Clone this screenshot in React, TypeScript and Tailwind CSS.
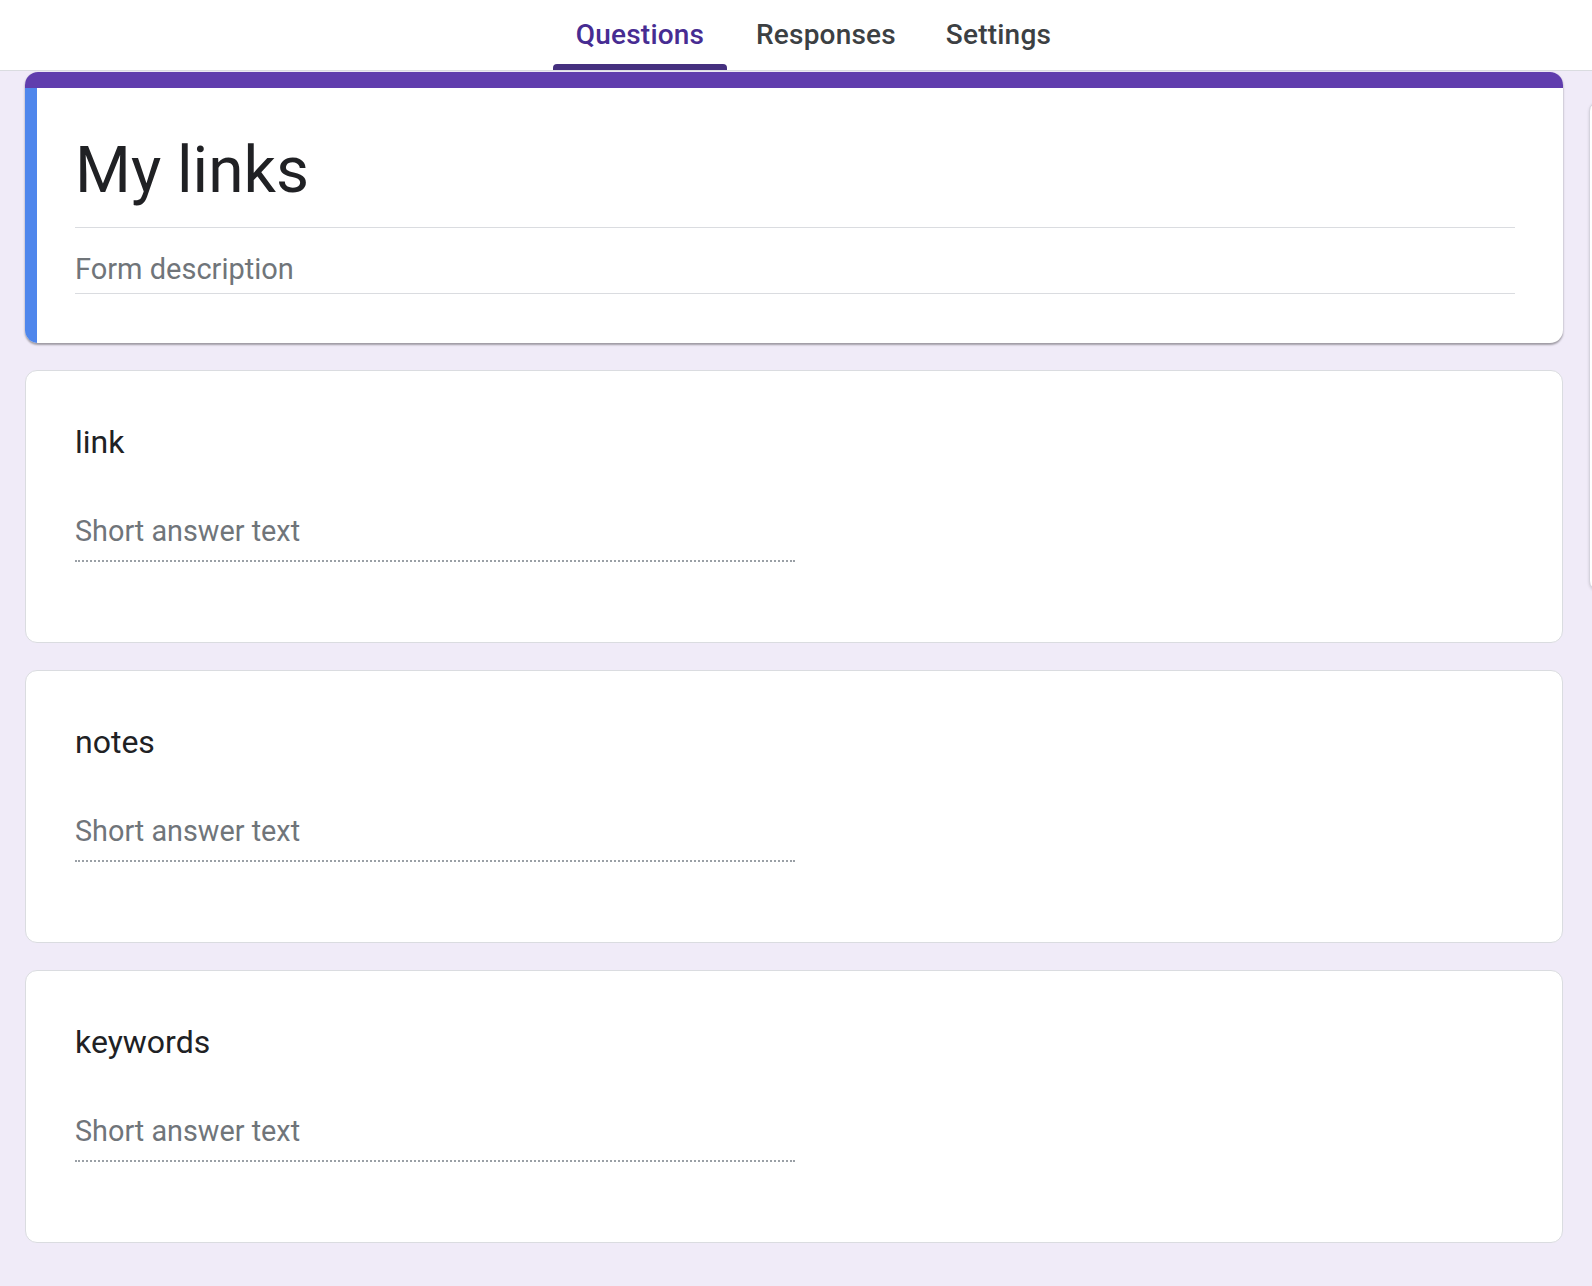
import React from "react";

const questions = ["link", "notes", "keywords"];

function QuestionCard({ title }: { title: string }) {
  return (
    <div className="h-[273px] w-[1538px] rounded-[12px] border border-[#dadce0] bg-white pl-[49px] pt-[51px]">
      <div className="text-[32px] leading-[40px] text-[#202124]">{title}</div>
      <div className="mt-[49px] w-[720px] border-b-2 border-dotted border-[#9aa0a6] pb-[9px]">
        <div className="text-[28.8px] leading-[40px] text-[#70757a]">Short answer text</div>
      </div>
    </div>
  );
}

export default function App() {
  return (
    <div
      className="relative min-h-[1286px] w-full overflow-hidden bg-[#f0ebf8]"
      style={{ fontFamily: "Roboto, 'Liberation Sans', sans-serif" }}
    >
      <header className="flex h-[71px] border-b border-[#dadce0] bg-white pl-[553px]">
        <nav className="flex h-[70px] items-stretch">
          <div className="relative flex w-[174px] items-center justify-center">
            <span className="text-[28px] font-medium tracking-[0.2px] text-[#472c92]">Questions</span>
            <div className="absolute bottom-0 left-0 right-0 h-[6px] rounded-t-[4px] bg-[#45307f]"></div>
          </div>
          <div className="flex items-center pl-[29px] pr-[25px]">
            <span className="text-[28px] font-medium tracking-[0.2px] text-[#3c4043]">Responses</span>
          </div>
          <div className="flex items-center px-[25px]">
            <span className="text-[28px] font-medium tracking-[0.2px] text-[#3c4043]">Settings</span>
          </div>
        </nav>
      </header>

      <main className="flex flex-col gap-[27px] pl-[25px] pt-px">
        <div className="w-[1538px] overflow-hidden rounded-[13px] bg-white shadow-[0_2px_2px_rgba(0,0,0,0.28),0_1px_3px_rgba(0,0,0,0.12)]">
          <div className="h-[16px] bg-[#603dad]"></div>
          <div className="flex">
            <div className="w-[12px] shrink-0 bg-[#4f86ec]"></div>
            <div className="flex-1 pb-[49px] pl-[38px] pr-[48px] pt-[44px]">
              <div className="border-b border-[#dadce0] pb-[18px]">
                <div className="text-[64px] leading-[77px] text-[#202124]">My links</div>
              </div>
              <div className="border-b border-[#dadce0] pb-[4px] pt-[21px]">
                <div className="text-[29px] leading-[40px] text-[#70757a]">Form description</div>
              </div>
            </div>
          </div>
        </div>

        {questions.map((q) => (
          <QuestionCard key={q} title={q} />
        ))}
      </main>

      <div className="absolute left-[1589px] top-[101px] h-[490px] w-[60px] rounded-[10px] border border-[#d5d3de] bg-white shadow-[0_1px_3px_rgba(0,0,0,0.15)]"></div>
    </div>
  );
}
